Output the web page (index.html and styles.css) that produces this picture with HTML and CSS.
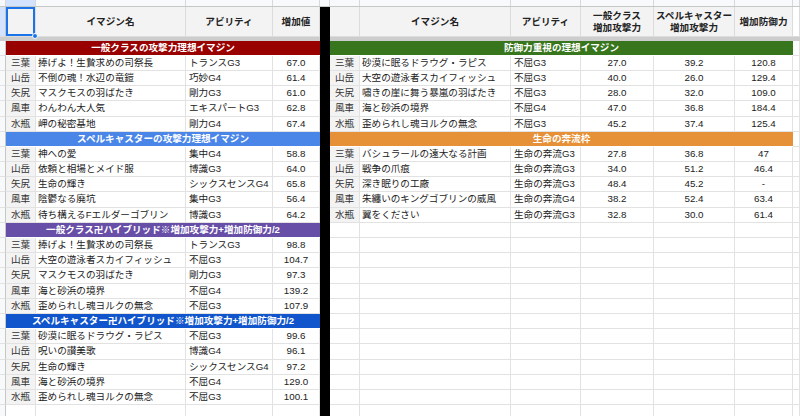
FILE: index.html
```html
<!DOCTYPE html>
<html lang="ja">
<head>
<meta charset="utf-8">
<title>イマジン</title>
<link rel="stylesheet" href="styles.css">
</head>
<body>
<div class="sheet">
  <div class="colbar">
    <span class="c"></span><span class="c selc"></span><span class="c"></span><span class="c"></span><span class="c"></span><span class="c"></span>
    <span class="c"></span><span class="c"></span><span class="c"></span><span class="c"></span><span class="c"></span><span class="c"></span><span class="c"></span>
  </div>
  <div class="panes">
    <div class="pane left">
      <div class="row hdr"><span class="rn selr"></span><span class="a sel"><b class="handle"></b></span><span>イマジン名</span><span>アビリティ</span><span>増加値</span></div>
      <div class="freeze"></div>

      <div class="row band red"><span class="rn"></span><span class="bt">一般クラスの攻撃力理想イマジン</span></div>
      <div class="row"><span class="rn"></span><span class="a">三葉</span><span class="nm">捧げよ！生贄求めの司祭長</span><span class="ab">トランスG3</span><span class="v">67.0</span></div>
      <div class="row"><span class="rn"></span><span class="a">山岳</span><span class="nm">不倒の魂！水辺の竜鎧</span><span class="ab">巧妙G4</span><span class="v">61.4</span></div>
      <div class="row"><span class="rn"></span><span class="a">矢尻</span><span class="nm">マスクモスの羽ばたき</span><span class="ab">剛力G3</span><span class="v">61.0</span></div>
      <div class="row"><span class="rn"></span><span class="a">風車</span><span class="nm">わんわん大人気</span><span class="ab">エキスパートG3</span><span class="v">62.8</span></div>
      <div class="row"><span class="rn"></span><span class="a">水瓶</span><span class="nm">岬の秘密基地</span><span class="ab">剛力G4</span><span class="v">67.4</span></div>

      <div class="row band blue"><span class="rn"></span><span class="bt">スペルキャスターの攻撃力理想イマジン</span></div>
      <div class="row"><span class="rn"></span><span class="a">三葉</span><span class="nm">神への愛</span><span class="ab">集中G4</span><span class="v">58.8</span></div>
      <div class="row"><span class="rn"></span><span class="a">山岳</span><span class="nm">依頼と相場とメイド服</span><span class="ab">博識G3</span><span class="v">64.0</span></div>
      <div class="row"><span class="rn"></span><span class="a">矢尻</span><span class="nm">生命の輝き</span><span class="ab">シックスセンスG4</span><span class="v">65.8</span></div>
      <div class="row"><span class="rn"></span><span class="a">風車</span><span class="nm">陰鬱なる廃坑</span><span class="ab">集中G3</span><span class="v">56.4</span></div>
      <div class="row"><span class="rn"></span><span class="a">水瓶</span><span class="nm">待ち構えるFエルダーゴブリン</span><span class="ab">博識G3</span><span class="v">64.2</span></div>

      <div class="row band purple"><span class="rn"></span><span class="bt">一般クラス卍ハイブリッド※増加攻撃力+増加防御力/2</span></div>
      <div class="row"><span class="rn"></span><span class="a">三葉</span><span class="nm">捧げよ！生贄求めの司祭長</span><span class="ab">トランスG3</span><span class="v">98.8</span></div>
      <div class="row"><span class="rn"></span><span class="a">山岳</span><span class="nm">大空の遊泳者スカイフィッシュ</span><span class="ab">不屈G3</span><span class="v">104.7</span></div>
      <div class="row"><span class="rn"></span><span class="a">矢尻</span><span class="nm">マスクモスの羽ばたき</span><span class="ab">剛力G3</span><span class="v">97.3</span></div>
      <div class="row"><span class="rn"></span><span class="a">風車</span><span class="nm">海と砂浜の境界</span><span class="ab">不屈G4</span><span class="v">139.2</span></div>
      <div class="row"><span class="rn"></span><span class="a">水瓶</span><span class="nm">歪められし魂ヨルクの無念</span><span class="ab">不屈G3</span><span class="v">107.9</span></div>

      <div class="row band navy"><span class="rn"></span><span class="bt">スペルキャスター卍ハイブリッド※増加攻撃力+増加防御力/2</span></div>
      <div class="row"><span class="rn"></span><span class="a">三葉</span><span class="nm">砂漠に眠るドラウグ・ラピス</span><span class="ab">不屈G3</span><span class="v">99.6</span></div>
      <div class="row"><span class="rn"></span><span class="a">山岳</span><span class="nm">呪いの讃美歌</span><span class="ab">博識G4</span><span class="v">96.1</span></div>
      <div class="row"><span class="rn"></span><span class="a">矢尻</span><span class="nm">生命の輝き</span><span class="ab">シックスセンスG4</span><span class="v">97.2</span></div>
      <div class="row"><span class="rn"></span><span class="a">風車</span><span class="nm">海と砂浜の境界</span><span class="ab">不屈G4</span><span class="v">129.0</span></div>
      <div class="row"><span class="rn"></span><span class="a">水瓶</span><span class="nm">歪められし魂ヨルクの無念</span><span class="ab">不屈G3</span><span class="v">100.1</span></div>
      <div class="row empty"><span class="rn"></span><span></span><span></span><span></span><span></span></div>
    </div>

    <div class="divider"></div>

    <div class="pane right">
      <div class="row hdr"><span class="a"></span><span>イマジン名</span><span>アビリティ</span><span class="two">一般クラス<br>増加攻撃力</span><span class="two">スペルキャスター<br>増加攻撃力</span><span>増加防御力</span><span class="x"></span></div>
      <div class="freeze"></div>

      <div class="row band green"><span class="bt">防御力重視の理想イマジン</span><span class="x"></span></div>
      <div class="row"><span class="a">三葉</span><span class="nm">砂漠に眠るドラウグ・ラピス</span><span class="ab">不屈G3</span><span class="v">27.0</span><span class="v">39.2</span><span class="v">120.8</span><span class="x"></span></div>
      <div class="row"><span class="a">山岳</span><span class="nm">大空の遊泳者スカイフィッシュ</span><span class="ab">不屈G3</span><span class="v">40.0</span><span class="v">26.0</span><span class="v">129.4</span><span class="x"></span></div>
      <div class="row"><span class="a">矢尻</span><span class="nm">嘯きの崖に舞う暴嵐の羽ばたき</span><span class="ab">不屈G3</span><span class="v">28.0</span><span class="v">32.0</span><span class="v">109.0</span><span class="x"></span></div>
      <div class="row"><span class="a">風車</span><span class="nm">海と砂浜の境界</span><span class="ab">不屈G4</span><span class="v">47.0</span><span class="v">36.8</span><span class="v">184.4</span><span class="x"></span></div>
      <div class="row"><span class="a">水瓶</span><span class="nm">歪められし魂ヨルクの無念</span><span class="ab">不屈G3</span><span class="v">45.2</span><span class="v">37.4</span><span class="v">125.4</span><span class="x"></span></div>

      <div class="row band orange"><span class="bt">生命の奔流枠</span><span class="x"></span></div>
      <div class="row"><span class="a">三葉</span><span class="nm">バシュラールの遠大なる計画</span><span class="ab">生命の奔流G3</span><span class="v">27.8</span><span class="v">36.8</span><span class="v">47</span><span class="x"></span></div>
      <div class="row"><span class="a">山岳</span><span class="nm">戦争の爪痕</span><span class="ab">生命の奔流G3</span><span class="v">34.0</span><span class="v">51.2</span><span class="v">46.4</span><span class="x"></span></div>
      <div class="row"><span class="a">矢尻</span><span class="nm">深き眠りの工廠</span><span class="ab">生命の奔流G3</span><span class="v">48.4</span><span class="v">45.2</span><span class="v">-</span><span class="x"></span></div>
      <div class="row"><span class="a">風車</span><span class="nm">朱纏いのキングゴブリンの威風</span><span class="ab">生命の奔流G4</span><span class="v">38.2</span><span class="v">52.4</span><span class="v">63.4</span><span class="x"></span></div>
      <div class="row"><span class="a">水瓶</span><span class="nm">翼をください</span><span class="ab">生命の奔流G3</span><span class="v">32.8</span><span class="v">30.0</span><span class="v">61.4</span><span class="x"></span></div>

      <div class="row empty"><span></span><span></span><span></span><span></span><span></span><span></span><span class="x"></span></div>
      <div class="row empty"><span></span><span></span><span></span><span></span><span></span><span></span><span class="x"></span></div>
      <div class="row empty"><span></span><span></span><span></span><span></span><span></span><span></span><span class="x"></span></div>
      <div class="row empty"><span></span><span></span><span></span><span></span><span></span><span></span><span class="x"></span></div>
      <div class="row empty"><span></span><span></span><span></span><span></span><span></span><span></span><span class="x"></span></div>
      <div class="row empty"><span></span><span></span><span></span><span></span><span></span><span></span><span class="x"></span></div>
      <div class="row empty"><span></span><span></span><span></span><span></span><span></span><span></span><span class="x"></span></div>
      <div class="row empty"><span></span><span></span><span></span><span></span><span></span><span></span><span class="x"></span></div>
      <div class="row empty"><span></span><span></span><span></span><span></span><span></span><span></span><span class="x"></span></div>
      <div class="row empty"><span></span><span></span><span></span><span></span><span></span><span></span><span class="x"></span></div>
      <div class="row empty"><span></span><span></span><span></span><span></span><span></span><span></span><span class="x"></span></div>
      <div class="row empty"><span></span><span></span><span></span><span></span><span></span><span></span><span class="x"></span></div>
      <div class="row empty"><span></span><span></span><span></span><span></span><span></span><span></span><span class="x"></span></div>
    </div>
  </div>
</div>
</body>
</html>
```

FILE: styles.css
```css
* { box-sizing: border-box; }
html, body { margin: 0; padding: 0; }
body {
  width: 800px;
  height: 416px;
  overflow: hidden;
  background: #fff;
  font-family: "Liberation Sans", "Noto Sans CJK JP", sans-serif;
  font-size: 9.6px;
  color: #222;
}
.sheet { width: 800px; height: 416px; overflow: hidden; }

.colbar {
  display: grid;
  grid-template-columns: 6px 30px 150px 87px 47px 10px 30px 151px 70px 73px 81px 58px 7px;
  height: 7px;
  background: #f8f9fa;
  border-bottom: 1px solid #c4c7c5;
  overflow: hidden;
}
.colbar .c { border-right: 1px solid #d6d8da; }
.colbar .selc { background: #d3e3fd; }

.panes { display: flex; height: 409px; }
.pane { overflow: hidden; }
.left { width: 320px; }
.right { width: 470px; }
.divider { width: 10px; background: #000; }

.row {
  display: grid;
  height: 15.2px;
}
.left .row { grid-template-columns: 6px 30px 150px 87px 47px; }
.right .row { grid-template-columns: 30px 151px 70px 73px 81px 58px 1fr; }

.row > span {
  border-right: 1px solid #e2e2e2;
  border-bottom: 1px solid #e2e2e2;
  white-space: nowrap;
  overflow: hidden;
  line-height: 14px;
}
.row .rn { background: #f8f9fa; border-right-color: #c4c7c5; }
.row .a { background: #f3f3f3; text-align: center; color: #333; }
.row .nm { padding-left: 2px; }
.row .ab { padding-left: 3px; }
.row .v { text-align: center; font-size: 9.8px; }
.row .x { background: #fff; }
.row.empty .a, .row.empty span { background: #fff; }
.left .row.empty .rn { background: #f8f9fa; }

.row.hdr { height: 30px; }
.row.hdr > span {
  background: #f3f3f3;
  font-weight: bold;
  color: #222;
  text-align: center;
  line-height: 30px;
  border-color: #dcdcdc;
}
.row.hdr .two { line-height: 12px; padding-top: 3px; }
.row.hdr .rn.selr { background: #d3e3fd; border-right-color: #c4c7c5; }
.row.hdr .x { background: #fff; }
.row.hdr .sel {
  position: relative;
  overflow: visible;
  box-shadow: inset 0 0 0 2px #1a73e8;
}
.handle {
  position: absolute;
  right: -3px;
  bottom: -3px;
  width: 6px;
  height: 6px;
  border-radius: 50%;
  background: #1a73e8;
  border: 1px solid #fff;
  z-index: 2;
}

.freeze { height: 3.6px; background: #cdcdcd; }

.row.band { height: 15.2px; }
.row.band .bt {
  grid-column: 2 / 6;
  color: #fff;
  font-weight: bold;
  text-align: center;
  border-right: none;
  border-bottom: 1px solid #fff;
  line-height: 14.5px;
}
.right .row.band .bt { grid-column: 1 / 7; }
.red .bt { background: #990000; }
.blue .bt { background: #4a86e8; }
.purple .bt { background: #674ea7; }
.navy .bt { background: #1155cc; }
.green .bt { background: #38761d; }
.orange .bt { background: #e69138; }
```
